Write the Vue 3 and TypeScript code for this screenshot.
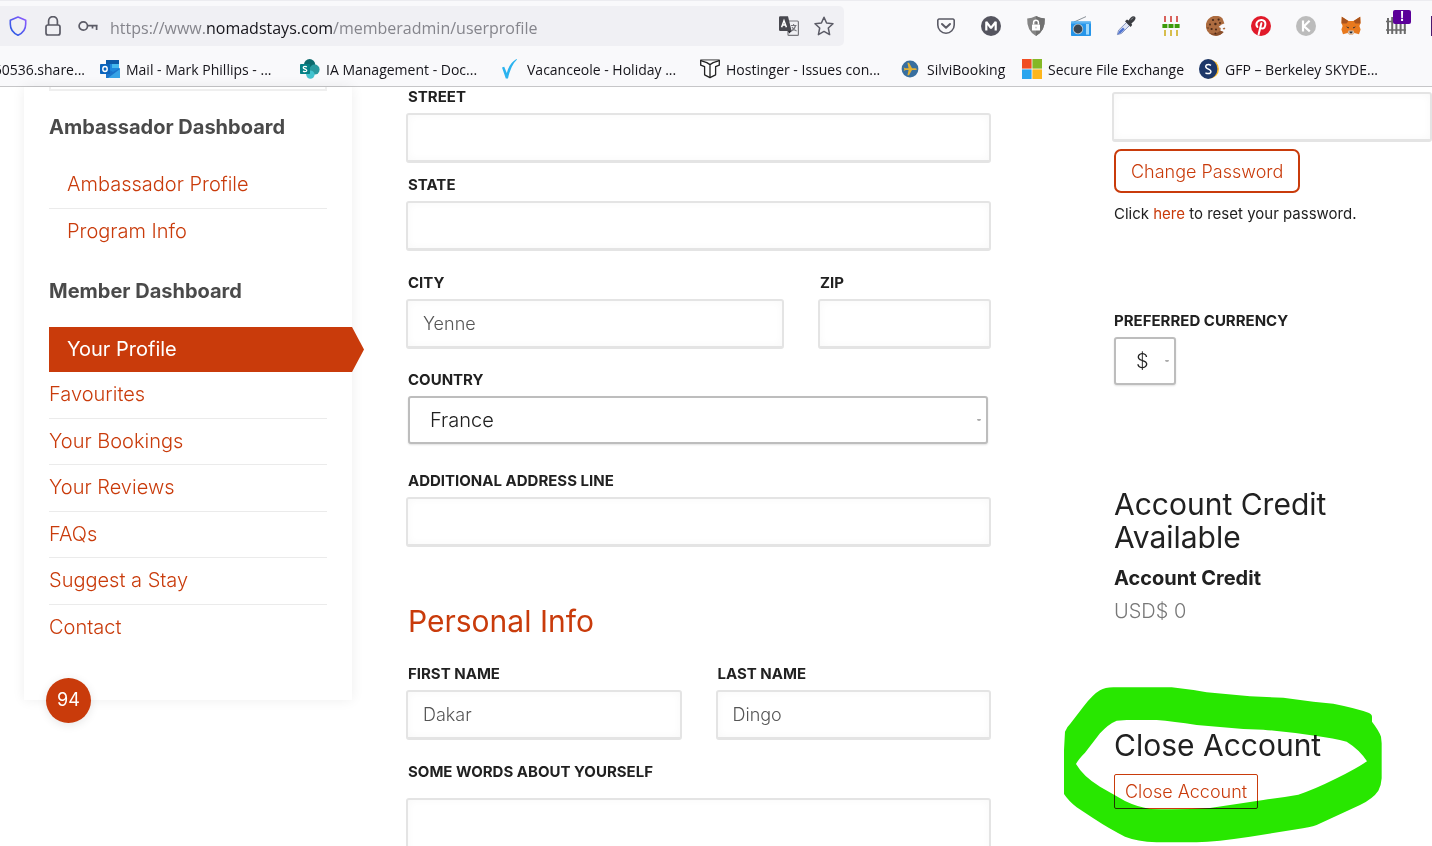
<script setup lang="ts">
import { ref } from 'vue'

interface MenuLink {
  label: string
}

const ambassadorLinks: MenuLink[] = [{ label: 'Ambassador Profile' }, { label: 'Program Info' }]
const memberLinks: MenuLink[] = [
  { label: 'Favourites' },
  { label: 'Your Bookings' },
  { label: 'Your Reviews' },
  { label: 'FAQs' },
  { label: 'Suggest a Stay' },
  { label: 'Contact' },
]

const street = ref('')
const state = ref('')
const city = ref('Yenne')
const zip = ref('')
const country = ref('France')
const extraLine = ref('')
const firstName = ref('Dakar')
const lastName = ref('Dingo')
const about = ref('')
const password = ref('')
const currency = ref('$')
</script>

<template>
  <div class="window">
    <header class="chrome">
      <div class="toolbar">
        <div class="urlbar">
          <button class="tool" type="button" aria-label="Tracking protection">
            <svg viewBox="0 0 20 20">
              <defs>
                <linearGradient id="shieldStroke" x1="0" y1="1" x2="1" y2="0">
                  <stop offset="0" stop-color="#1f5be0" />
                  <stop offset="1" stop-color="#9059ff" />
                </linearGradient>
              </defs>
              <path d="M10 1 L17.7 4.2 V8 C17.7 13 15 17 10 19.2 C5 17 2.3 13 2.3 8 V4.2 Z" fill="none" stroke="url(#shieldStroke)" stroke-width="1.6" stroke-linejoin="round" />
            </svg>
          </button>
          <button class="tool lock" type="button" aria-label="Connection secure">
            <svg viewBox="0 0 20 20" fill="none" stroke="#5b5b66" stroke-width="1.7">
              <rect x="3" y="9" width="14" height="10" rx="2" />
              <path d="M5.6 9 V5 A4.4 4.4 0 0 1 14.4 5 V9" />
            </svg>
          </button>
          <button class="tool key" type="button" aria-label="Saved login">
            <svg viewBox="0 0 20 20" fill="none" stroke="#5b5b66" stroke-width="1.7">
              <circle cx="5.3" cy="10" r="4.2" />
              <path d="M9.5 9.6 H19.6 M14.5 9.6 V12.6 M18.6 9.6 V14" />
            </svg>
          </button>
          <span class="url">https://www.<b>nomadstays.com</b>/memberadmin/userprofile</span>
          <button class="tool" type="button" aria-label="Translate page">
            <svg viewBox="0 0 20 20">
              <rect x="9" y="5" width="10.4" height="14.4" rx="1" fill="#f0f0f4" stroke="#77777d" stroke-width="1.2" />
              <path d="M12 9.5 H17.5 M14.6 8 V9.5 M16.6 9.5 Q15.5 13.5 12 15.2 M13 11 Q14.6 14 17.6 15" fill="none" stroke="#77777d" stroke-width="1.1" />
              <path d="M0 1.5 A1.2 1.2 0 0 1 1.2 .3 H9 L12.6 15 H1.2 A1.2 1.2 0 0 1 0 13.8 Z" fill="#48484f" />
              <path d="M8.8 15 H12.5 L10.4 17.6 Z" fill="#2b2b31" />
              <path d="M2.6 11.3 L5 4.6 L7.4 11.3 M3.4 9 H6.6" fill="none" stroke="#fff" stroke-width="1.5" />
            </svg>
          </button>
          <button class="tool star" type="button" aria-label="Bookmark this page">
            <svg viewBox="0 0 20 20">
              <path d="M10 1.2 L12.6 7 L19 7.7 L14.3 12 L15.6 18.6 L10 15.4 L4.4 18.6 L5.7 12 L1 7.7 L7.4 7 Z" fill="none" stroke="#5b5b66" stroke-width="1.5" stroke-linejoin="round" />
            </svg>
          </button>
        </div>

        <div class="extensions">
          <button class="tool" type="button" aria-label="Save to Pocket">
            <svg viewBox="0 0 20 20" fill="none" stroke="#5b5b66" stroke-width="1.6" stroke-linecap="round" stroke-linejoin="round">
              <path d="M3 3 H17 A1.6 1.6 0 0 1 18.2 4.4 V9 A8.2 8.2 0 0 1 1.8 9 V4.4 A1.6 1.6 0 0 1 3 3 Z" />
              <path d="M6 8 L10 11.8 L14 8" stroke-width="2" />
            </svg>
          </button>
          <button class="tool" type="button" aria-label="Account">
            <svg viewBox="0 0 20 20">
              <circle cx="10" cy="10" r="10" fill="#55555f" />
              <path d="M5.3 14.6 V5.8 L10 12 L14.7 5.8 V14.6" fill="none" stroke="#fff" stroke-width="2.2" stroke-linejoin="bevel" />
            </svg>
          </button>
          <button class="tool" type="button" aria-label="Privacy shield">
            <svg viewBox="0 0 20 20">
              <path d="M10 0 Q14 2.4 18.8 2.6 Q19.4 15 10 20 Q.6 15 1.2 2.6 Q6 2.4 10 0 Z" fill="#858585" />
              <path d="M10 0 Q14 2.4 18.8 2.6 Q19.4 15 10 20 Z" fill="#717171" />
              <rect x="6" y="8.4" width="8" height="6.2" rx=".6" fill="#fff" />
              <path d="M7.6 8.6 V6.6 A2.4 2.4 0 0 1 12.4 6.6 V8.6" fill="none" stroke="#fff" stroke-width="1.5" />
              <path d="M10 10.8 V12.4" stroke="#a5a5a5" stroke-width="1" />
            </svg>
          </button>
          <button class="tool" type="button" aria-label="Radio">
            <svg viewBox="0 0 20 20">
              <path d="M3 6 L15 .6" stroke="#8b9299" stroke-width="1" />
              <rect x="0" y="5.6" width="20" height="14.4" rx=".8" fill="#2595ea" />
              <rect x="0" y="5.6" width="20" height="2" fill="#5bb4f2" />
              <circle cx="7" cy="13" r="5.2" fill="#b9cad6" />
              <circle cx="7" cy="13" r="4.4" fill="#3c4651" />
              <rect x="15" y="8" width="3" height="10.6" fill="#9fd8fb" />
            </svg>
          </button>
          <button class="tool" type="button" aria-label="Colour picker">
            <svg viewBox="0 0 20 20">
              <path d="M1.4 18.6 L2.6 14.2 L10.6 6.4 L13.6 9.4 L5.6 17.4 Z" fill="#dfe5f5" stroke="#7c8bb8" stroke-width=".9" />
              <path d="M1.6 18.4 L3.4 14.8 L7 11.4 L8.8 13.2 L5.2 16.8 Z" fill="#4f74d2" />
              <path d="M9 5.2 L11 3.6 L12.6 4.6 Q14.8 .4 17.4 .2 Q20 .4 19.4 3 Q18.6 5.4 15.4 7.6 L16.2 9 L14.6 11 Z" fill="#3b3d42" />
              <path d="M14.6 3.8 L17.4 1.6" stroke="#85878c" stroke-width="1" />
            </svg>
          </button>
          <button class="tool" type="button" aria-label="Tab grid">
            <svg viewBox="0 0 20 20">
              <path d="M4 0 V6 M10 0 V6 M16 0 V6" stroke="#d03d35" stroke-width="1.6" />
              <path d="M1.4 8 H6.4 V12 H1.4 Z M7.5 8 H12.5 V12 H7.5 Z M13.6 8 H18.6 V12 H13.6 Z" fill="#3c9b0b" />
              <path d="M4 14 V20 M10 14 V20 M16 14 V20" stroke="#cfb022" stroke-width="1.6" />
            </svg>
          </button>
          <button class="tool" type="button" aria-label="Cookie manager">
            <svg viewBox="0 0 20 20">
              <path d="M16.4 2.2 A10 10 0 1 0 17.6 16 L14.4 14.8 L14.8 12 L12.6 11 L15.6 8.4 L18.4 7.6 Z" fill="#ad6c40" />
              <path d="M17.6 16 A10 10 0 0 1 3 17 Q10 18.6 14.4 14.8 Z" fill="#8a4f2b" />
              <g fill="#482817">
                <circle cx="7" cy="4" r="1.1" /><circle cx="12.6" cy="3.6" r="1.1" /><circle cx="4" cy="8.6" r="1" />
                <circle cx="9.4" cy="8" r="1.2" /><circle cx="14" cy="7" r=".9" /><circle cx="5.6" cy="13" r="1.1" />
                <circle cx="10" cy="13.6" r="1" /><circle cx="9.4" cy="17.4" r=".9" /><circle cx="2" cy="12" r=".7" />
              </g>
              <path d="M16.6 12.4 L18.4 11.4 L19.4 12.6 L18 13.8 Z" fill="#ad6c40" />
            </svg>
          </button>
          <button class="tool" type="button" aria-label="Pinterest">
            <svg viewBox="0 0 20 20">
              <circle cx="10" cy="10" r="10" fill="#e11a2a" />
              <path d="M6.4 11 Q4.6 8.6 6 6.2 Q7.6 3.8 10.6 4 Q14.4 4.4 14.4 8 Q14.2 12.6 11 12.6 Q9.6 12.4 9.2 11.6 M10.4 7.2 L7.6 18.4" fill="none" stroke="#fff" stroke-width="2" stroke-linecap="round" />
            </svg>
          </button>
          <button class="tool" type="button" aria-label="K extension">
            <svg viewBox="0 0 20 20">
              <circle cx="10" cy="10" r="10" fill="#bcbcbc" />
              <path d="M7 4.6 V15.4 M13.6 4.8 L8 10.2 L13.8 15.4" fill="none" stroke="#fff" stroke-width="2.2" />
            </svg>
          </button>
          <button class="tool" type="button" aria-label="Wallet">
            <svg viewBox="0 0 20 20">
              <path d="M.8 .8 L7.4 5 H12.6 L19.2 .8 L19.6 7 L18.4 10 L19.6 13.4 L18 18.2 L13.4 17 L11.8 18.6 H8.2 L6.6 17 L2 18.2 L.4 13.4 L1.6 10 L.4 7 Z" fill="#e8791e" />
              <path d="M.8 .8 L7.4 5 L5.6 7.4 L.6 7.4 Z M19.2 .8 L12.6 5 L14.4 7.4 L19.4 7.4 Z" fill="#a9531c" />
              <path d="M6.6 17 L7.6 14.4 H12.4 L13.4 17 L11.8 18.6 H8.2 Z" fill="#d5c3b3" />
              <path d="M5 10.4 L8 11.2 L7.4 12.6 Z M15 10.4 L12 11.2 L12.6 12.6 Z M8.4 15.6 H11.6 L11 17.2 H9 Z" fill="#252b36" />
            </svg>
          </button>
          <button class="tool" type="button" aria-label="Blocker, one alert">
            <svg viewBox="0 0 20 20" fill="none" stroke="#6b6b6b">
              <path d="M2 2 V18 M6.2 1 V18 M10.4 1 V18 M14.6 1 V18 M18.8 3 V18" stroke-width="2" />
              <path d="M0 5.5 H20 M0 14 H20" stroke-width="1.6" />
            </svg>
            <span class="alert-badge">!</span>
          </button>
          <span class="edge"></span>
        </div>
      </div>

      <nav class="bookmarks" aria-label="Bookmarks">
        <a href="#" class="bookmark cut">60536.share...</a>
        <a href="#" class="bookmark">
          <svg viewBox="0 0 20 20">
            <rect x="6" y="1" width="13" height="12" fill="#1e88dc" />
            <rect x="6" y="1" width="13" height="4" fill="#0d5aa7" />
            <rect x="12" y="5" width="7" height="4" fill="#46b9ee" />
            <path d="M6 9 L13 13 L20 9 V19 H6 Z" fill="#1b74cb" />
            <path d="M8 19 L20 10 V19 Z" fill="#37a3e6" />
            <rect x="0" y="5" width="10" height="10" rx=".8" fill="#0b64bd" />
            <ellipse cx="5" cy="10" rx="2.2" ry="2.5" fill="none" stroke="#fff" stroke-width="1.4" />
          </svg>
          <span>Mail - Mark Phillips - ...</span>
        </a>
        <a href="#" class="bookmark">
          <svg viewBox="0 0 20 20">
            <circle cx="9.6" cy="5.6" r="5.6" fill="#0c6a6d" />
            <circle cx="14.6" cy="10.6" r="5" fill="#2a9a9f" />
            <circle cx="10.4" cy="15.6" r="4.2" fill="#42c3cf" />
            <rect x="0" y="5" width="10" height="10" rx=".8" fill="#058085" />
            <path d="M6.9 7.9 Q5 6.9 3.7 7.7 Q2.7 8.9 4.2 9.7 L5.8 10.3 Q7.3 11.2 6.3 12.3 Q4.9 13.1 3 12.2" fill="none" stroke="#fff" stroke-width="1.3" />
          </svg>
          <span>IA Management - Doc...</span>
        </a>
        <a href="#" class="bookmark">
          <svg viewBox="0 0 20 20">
            <path d="M1 8.4 L3.2 7.8 L5.8 14 Q8.2 4.2 15.4 0 L16 .4 Q9.6 6.4 7 19.6 H4.8 Q2.6 12.8 1 8.4 Z" fill="#2bb3ef" />
          </svg>
          <span>Vacanceole - Holiday ...</span>
        </a>
        <a href="#" class="bookmark">
          <svg viewBox="0 0 20 20" fill="#fff" stroke="#222" stroke-width="1.3" stroke-linejoin="round">
            <path d="M.7 1.2 H19.3 V6.2 L15.6 7.6 V15.8 L10 18.6 L4.6 15.8 V7.6 L.7 6.2 Z" />
            <path d="M.8 1.6 L6.8 3.6 L10 5.6 L13.2 3.6 L19.2 1.6 M10 5.6 V18.4" />
          </svg>
          <span>Hostinger - Issues con...</span>
        </a>
        <a href="#" class="bookmark">
          <svg viewBox="0 0 20 20">
            <circle cx="9" cy="10" r="8.4" fill="#386f9f" />
            <path d="M2.6 8.4 L4.6 9.2 H7.6 L6.4 3.8 H8 L11 9.2 H14.4 Q16 9.6 16 10.2 Q15.6 11 14.4 11 H11 L8 16.2 H6.4 L7.6 11 H4.6 L2.6 12 L3.4 10.2 Z" fill="#e3b233" />
          </svg>
          <span>SilviBooking</span>
        </a>
        <a href="#" class="bookmark">
          <svg viewBox="0 0 20 20">
            <rect width="9.6" height="9.6" fill="#f04e23" />
            <rect x="10.4" width="9.6" height="9.6" fill="#85b826" />
            <rect y="10.4" width="9.6" height="9.6" fill="#2aa5ee" />
            <rect x="10.4" y="10.4" width="9.6" height="9.6" fill="#fdb61c" />
          </svg>
          <span>Secure File Exchange</span>
        </a>
        <a href="#" class="bookmark">
          <svg viewBox="0 0 20 20">
            <circle cx="10.4" cy="10" r="9.6" fill="#f8b92c" />
            <ellipse cx="9.2" cy="10" rx="9.2" ry="10" fill="#1d3768" />
            <path d="M12 6.4 Q9.6 4.8 7.4 6 Q5.8 7.8 8 9.4 L10.4 10.6 Q12.8 12 11.4 13.8 Q9.4 15.4 6.4 13.8" fill="none" stroke="#fff" stroke-width="1.5" />
          </svg>
          <span>GFP – Berkeley SKYDE...</span>
        </a>
      </nav>
    </header>

    <main class="page">
      <aside class="sidebar">
        <div class="panel-end"></div>
        <h2 class="menu-title">Ambassador Dashboard</h2>
        <ul class="menu menu-ambassador">
          <li v-for="link in ambassadorLinks" :key="link.label"><a href="#">{{ link.label }}</a></li>
        </ul>
        <h2 class="menu-title">Member Dashboard</h2>
        <a href="#" class="current" aria-current="page">Your Profile</a>
        <ul class="menu menu-member">
          <li v-for="link in memberLinks" :key="link.label"><a href="#">{{ link.label }}</a></li>
        </ul>
        <span class="counter">94</span>
      </aside>

      <form class="profile" @submit.prevent>
        <div class="field">
          <label for="street">STREET</label>
          <input id="street" v-model="street" type="text" />
        </div>
        <div class="field after-street">
          <label for="state">STATE</label>
          <input id="state" v-model="state" type="text" />
        </div>
        <div class="row city-row">
          <div class="field">
            <label for="city">CITY</label>
            <input id="city" v-model="city" type="text" />
          </div>
          <div class="field">
            <label for="zip">ZIP</label>
            <input id="zip" v-model="zip" type="text" />
          </div>
        </div>
        <div class="field country">
          <label for="country">COUNTRY</label>
          <div class="select">
            <select id="country" v-model="country">
              <option>France</option>
              <option>Germany</option>
              <option>Spain</option>
            </select>
            <span class="tick"></span>
          </div>
        </div>
        <div class="field extra">
          <label for="extra">ADDITIONAL ADDRESS LINE</label>
          <input id="extra" v-model="extraLine" type="text" />
        </div>
        <h2 class="section-title">Personal Info</h2>
        <div class="row name-row">
          <div class="field">
            <label for="first">FIRST NAME</label>
            <input id="first" v-model="firstName" type="text" />
          </div>
          <div class="field">
            <label for="last">LAST NAME</label>
            <input id="last" v-model="lastName" type="text" />
          </div>
        </div>
        <div class="field about">
          <label for="about">SOME WORDS ABOUT YOURSELF</label>
          <textarea id="about" v-model="about" rows="5"></textarea>
        </div>
      </form>

      <section class="account">
        <input v-model="password" type="password" aria-label="Confirm new password" />
        <div class="account-body">
          <button type="button" class="change">Change Password</button>
          <p class="hint">Click <a href="#">here</a> to reset your password.</p>
          <div class="currency">
            <label for="currency">PREFERRED CURRENCY</label>
            <div class="select">
              <select id="currency" v-model="currency">
                <option>$</option>
                <option>€</option>
                <option>£</option>
              </select>
              <span class="tick"></span>
            </div>
          </div>
          <h2 class="heading credit-heading">Account Credit Available</h2>
          <h3 class="credit-title">Account Credit</h3>
          <p class="credit-value">USD$ 0</p>
          <div class="close">
            <h2 class="heading">Close Account</h2>
            <button type="button" class="close-button">Close Account</button>
            <svg class="marker" viewBox="0 0 1146 528" aria-hidden="true">
              <path
                fill="#28e700"
                fill-rule="evenodd"
                d="M45 185 Q50 172 62 160 L100 110 Q130 72 150 61 Q165 52 190 52 L365 52 Q420 58 470 67 L600 79 L700 83 L790 95 L850 101 Q920 115 955 128 Q966 132 966 140 L966 155 Q988 184 993 200 L995 220 L995 325 Q994 345 985 362 Q970 385 930 405 L800 465 Q780 472 740 478 L600 500 Q500 515 440 517 L320 517 Q260 514 225 500 Q180 478 130 445 L80 412 Q55 392 42 372 L42 240 Z M78 282 Q85 268 105 248 L150 190 Q175 162 200 152 L230 150 L320 150 Q370 154 440 165 L580 177 L640 179 Q720 186 800 198 Q850 205 890 215 Q930 240 951 274 Q920 295 860 325 Q790 360 745 374 Q700 382 640 390 L480 414 Q400 420 300 417 Q260 410 225 393 L150 350 Q100 320 78 282 Z"
              />
            </svg>
          </div>
        </div>
      </section>
    </main>
  </div>
</template>

<style>
body {
  margin: 0;
  background: #fff;
}
</style>

<style scoped>
* {
  box-sizing: border-box;
}

.window {
  display: flex;
  flex-direction: column;
  height: 100vh;
  overflow: hidden;
  font-family: Inter, 'Liberation Sans', sans-serif;
  color: #212121;
}

h2,
h3,
p,
ul {
  margin: 0;
  padding: 0;
}

a {
  color: #c93b0b;
  text-decoration: none;
}

/* Browser toolbar */
.chrome {
  flex: none;
  background: #f9f9fb;
  border-top: 1px solid #ececf0;
  border-bottom: 1px solid #c6c6c8;
  font-family: 'Open Sans', 'Noto Sans', sans-serif;
}

.toolbar {
  display: flex;
  padding-top: 5px;
}

.urlbar {
  flex: 1;
  display: flex;
  align-items: center;
  height: 40px;
  min-width: 0;
  padding: 0 10px 0 8px;
  border-radius: 0 5px 5px 0;
  background: #f0f0f4;
}

.tool {
  flex: none;
  position: relative;
  width: 20px;
  height: 20px;
  padding: 0;
  border: 0;
  background: none;
}

.tool svg {
  display: block;
  width: 20px;
  height: 20px;
}

.lock,
.key,
.star {
  margin-left: 15px;
}

.url {
  flex: 1;
  min-width: 0;
  margin-left: 12px;
  padding-top: 3px;
  overflow: hidden;
  white-space: nowrap;
  font-size: 16px;
  line-height: 24px;
  color: #85858c;
}

.url b {
  font-weight: 400;
  color: #15141a;
}

.extensions {
  flex: none;
  display: flex;
  align-items: center;
  gap: 25px;
  margin-left: 92px;
}

.alert-badge {
  position: absolute;
  top: -6px;
  right: -5px;
  width: 18px;
  height: 14px;
  border-radius: 2px;
  background: #5b0099;
  color: #fff;
  font-size: 14px;
  font-weight: 700;
  line-height: 13px;
}

.edge {
  width: 1px;
  height: 20px;
  background: #4b1a70;
}

.bookmarks {
  display: grid;
  grid-template-columns: 85px 185px 186px 184px 186px 106px 162px 1fr;
  gap: 15px;
  height: 40px;
  padding-top: 6px;
}

.bookmark {
  display: flex;
  align-items: center;
  gap: 6px;
  height: 34px;
  white-space: nowrap;
  font-size: 14px;
  color: #15141a;
}

.bookmark svg {
  flex: none;
  width: 20px;
  height: 20px;
}

.cut {
  justify-content: flex-end;
  overflow: hidden;
}

/* Page */
.page {
  flex: 1;
  min-height: 0;
  display: grid;
  grid-template-columns: 328px minmax(0, 639fr) minmax(0, 441fr);
  align-items: start;
  padding-left: 24px;
}

.sidebar {
  position: relative;
  padding: 0 25px 49px;
  background: #fff;
  box-shadow: 0 0 12px rgba(0, 0, 0, 0.07);
}

.panel-end {
  height: 4px;
  border: 2px solid #efefef;
  border-top: 0;
}

.menu-title {
  padding-top: 24px;
  font-size: 20px;
  font-weight: 700;
  line-height: 24px;
  color: #4a4a4a;
}

.menu {
  display: grid;
  grid-auto-rows: 1fr;
  list-style: none;
  font-size: 20px;
  font-weight: 350;
}

.menu li {
  display: flex;
  align-items: center;
  padding-bottom: 1px;
  border-bottom: 1px solid #ebebeb;
}

.menu li:last-child {
  border-bottom-color: transparent;
}

.menu-ambassador {
  height: 93px;
  margin-top: 23px;
}

.menu-ambassador a {
  padding-left: 18px;
}

.menu-member {
  height: 279px;
}

.current {
  display: block;
  margin: 24px -37px 0 0;
  padding-left: 18px;
  background: #c93b0b;
  clip-path: polygon(0 0, calc(100% - 12px) 0, 100% 50%, calc(100% - 12px) 100%, 0 100%);
  color: #fff;
  font-size: 20px;
  line-height: 45px;
}

.counter {
  position: absolute;
  left: 22px;
  bottom: -23px;
  width: 45px;
  height: 45px;
  border-radius: 50%;
  background: #c93b0b;
  box-shadow: 0 2px 10px rgba(0, 0, 0, 0.1);
  color: #fff;
  font-size: 18px;
  line-height: 44px;
  text-align: center;
}

label {
  display: block;
  padding-left: 2px;
  font-size: 15px;
  font-weight: 700;
  line-height: 20px;
}

input,
textarea {
  display: block;
  width: 100%;
  height: 50px;
  padding: 0 15px;
  border: 2px solid #e4e4e4;
  border-bottom-width: 3px;
  border-radius: 3px;
  background: #fff;
  box-shadow: inset 0 0 8px rgba(0, 0, 0, 0.03);
  color: #555;
  font-family: inherit;
  font-size: 18px;
  font-weight: 300;
}

.field input,
.field .select,
.field textarea {
  margin-top: 6px;
}

.field textarea {
  height: auto;
  margin-top: 16px;
  padding: 12px 15px;
  resize: none;
}

.profile {
  margin-left: 54px;
}

.after-street {
  margin-top: 12px;
}

.row {
  display: grid;
  gap: 34px;
}

.city-row {
  grid-template-columns: 378fr 173fr;
  margin-top: 22px;
}

.name-row {
  grid-template-columns: 1fr 1fr;
  margin-top: 23px;
}

.country {
  margin-top: 21px;
}

.country .select {
  margin-left: 2px;
  margin-right: 3px;
}

.extra {
  margin-top: 27px;
}

.section-title {
  margin-top: 54px;
  padding-left: 2px;
  color: #c93b0b;
  font-size: 30px;
  font-weight: 400;
  line-height: 40px;
}

.about {
  margin-top: 22px;
}

.select {
  position: relative;
}

select {
  appearance: none;
  display: block;
  width: 100%;
  height: 48px;
  padding: 0 20px;
  border: 2px solid #bdbdbd;
  border-radius: 3px;
  background: #fff;
  box-shadow: 0 1px 2px rgba(0, 0, 0, 0.12);
  color: #212121;
  font-family: inherit;
  font-size: 20px;
  font-weight: 350;
}

.tick {
  position: absolute;
  top: 23px;
  right: 7px;
  width: 4px;
  height: 2px;
  border-radius: 0 0 2px 2px;
  background: #aaa;
  pointer-events: none;
}

/* Account column */
.account {
  margin-left: 121px;
  padding-top: 5px;
}

.account-body {
  padding-left: 2px;
}

.change {
  margin-top: 7px;
  height: 44px;
  padding: 0 15px;
  border: 2px solid #c93b0b;
  border-radius: 7px;
  background: #fff;
  color: #c93b0b;
  font-family: inherit;
  font-size: 18px;
  font-weight: 300;
}

.hint {
  margin-top: 11px;
  font-size: 15px;
  line-height: 20px;
}

.currency {
  margin-top: 87px;
}

.currency label {
  padding-left: 0;
}

.currency .select {
  width: 62px;
  margin-top: 6px;
}

.heading {
  font-size: 30px;
  font-weight: 400;
  line-height: 33px;
}

.credit-heading {
  margin-top: 103px;
  max-width: 260px;
}

.credit-title {
  margin-top: 12px;
  font-size: 20px;
  font-weight: 700;
  line-height: 24px;
}

.credit-value {
  margin-top: 9px;
  color: #777;
  font-size: 20px;
  font-weight: 300;
  line-height: 24px;
}

.close {
  position: relative;
  margin-top: 106px;
}

.close-button {
  display: block;
  margin-top: 12px;
  height: 35px;
  padding: 0 10px;
  border: 1px solid #c93b0b;
  border-radius: 2px;
  background: #fff;
  color: #c93b0b;
  font-family: inherit;
  font-size: 18px;
  font-weight: 300;
}

/* Highlighter stroke laid over the section */
.marker {
  position: absolute;
  top: -59px;
  left: -64px;
  width: 382px;
  height: 176px;
  mix-blend-mode: multiply;
  pointer-events: none;
}
</style>
